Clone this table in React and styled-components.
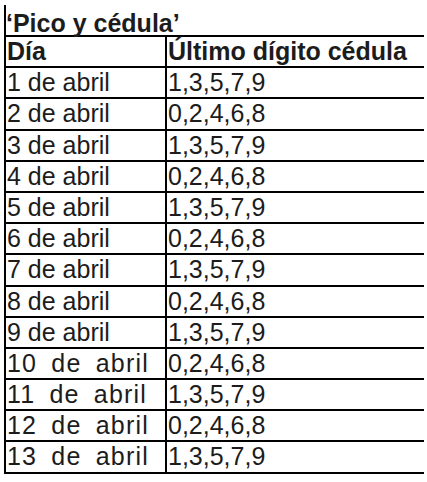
import React from "react";
import styled, {createGlobalStyle} from "styled-components";

const rows = [
  ["1 de abril", "1,3,5,7,9"],
  ["2 de abril", "0,2,4,6,8"],
  ["3 de abril", "1,3,5,7,9"],
  ["4 de abril", "0,2,4,6,8"],
  ["5 de abril", "1,3,5,7,9"],
  ["6 de abril", "0,2,4,6,8"],
  ["7 de abril", "1,3,5,7,9"],
  ["8 de abril", "0,2,4,6,8"],
  ["9 de abril", "1,3,5,7,9"],
  ["10 de abril", "0,2,4,6,8"],
  ["11 de abril", "1,3,5,7,9"],
  ["12 de abril", "0,2,4,6,8"],
  ["13 de abril", "1,3,5,7,9"],
];

export default function App() {
  return (
    <Page>
      <GlobalStyle />
      <Title>‘Pico y cédula’</Title>
      <Table>
        <Row>
          <Cell $bold $first>Día</Cell>
          <Cell $bold>Último dígito cédula</Cell>
        </Row>
        {rows.map(([day, digits]) => (
          <Row key={day}>
            <Cell $first $wide={day.length > 10}>{day}</Cell>
            <Cell>{digits}</Cell>
          </Row>
        ))}
      </Table>
    </Page>
  );
}

const GlobalStyle = createGlobalStyle`
  body {
    margin: 0;
    background: #fff;
    font-family: "Liberation Sans", Arial, sans-serif;
    color: #1c1c1c;
  }
`;

const Page = styled.div`
  padding: 5px 0 0 4px;
  width: 420px;
`;

const Title = styled.div`
  border-left: 2px solid #000;
  padding-top: 6px;
  line-height: 24px;
  font-size: 25px;
  font-weight: 700;
  white-space: nowrap;
`;

const Table = styled.div`
  border-top: 2px solid #000;
  border-left: 2px solid #000;
`;

const Row = styled.div`
  display: grid;
  grid-template-columns: 161px 1fr;
  border-bottom: 2px solid #000;
  height: 29.2px;
`;

const Cell = styled.div`
  font-size: 25px;
  line-height: 29px;
  padding-left: 1px;
  font-weight: ${props => (props.$bold ? 700 : 400)};
  white-space: nowrap;
  letter-spacing: ${props => (props.$wide ? "1.2px" : "0")};
  word-spacing: ${props => (props.$wide ? "6px" : "0")};
  ${props => props.$first && `border-right: 2px solid #000;`}
`;
